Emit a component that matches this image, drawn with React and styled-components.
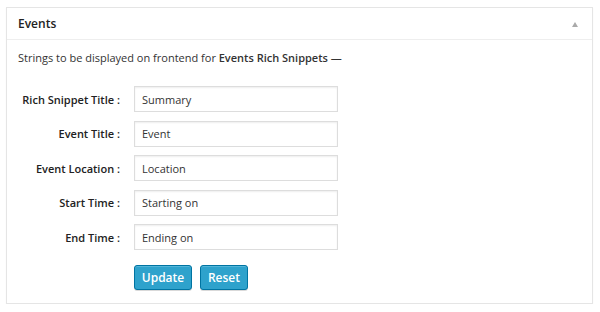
import React from "react";
import styled, { createGlobalStyle } from "styled-components";

const GlobalStyle = createGlobalStyle`
  body {
    margin: 0;
    background: #ffffff;
    font-family: "Open Sans", "Liberation Sans", sans-serif;
    color: #444;
  }
`;

const Page = styled.div`
  padding: 7px 7px 0 6px;
`;

const Panel = styled.div`
  width: 585px;
  height: 295px;
  border: 1px solid #e5e5e5;
  box-shadow: 0 1px 1px rgba(0, 0, 0, 0.06);
  background: #fff;
  display: flex;
  flex-direction: column;
`;

const Header = styled.div`
  height: 31px;
  border-bottom: 1px solid #eeeeee;
  display: flex;
  align-items: center;
  justify-content: space-between;
  padding: 0 14px 0 11px;
`;

const Title = styled.h3`
  margin: 0;
  font-size: 12px;
  font-weight: 600;
  color: #222;
`;

const Toggle = styled.span`
  width: 0;
  height: 0;
  border-left: 3.5px solid transparent;
  border-right: 3.5px solid transparent;
  border-bottom: 5px solid #aaaaaa;
  margin-top: 1px;
`;

const Body = styled.div`
  padding: 10px 11px 0 11px;
`;

const Intro = styled.p`
  margin: 0 0 20px;
  font-size: 11px;
  line-height: 16px;
  color: #333;

  strong {
    font-weight: 600;
  }
`;

const Form = styled.div`
  display: grid;
  grid-template-columns: 102px 204px;
  column-gap: 14px;
  row-gap: 8.5px;
  align-items: center;
`;

const Label = styled.label`
  text-align: right;
  font-size: 11px;
  font-weight: 600;
  color: #222;
`;

const Input = styled.input`
  box-sizing: border-box;
  height: 26px;
  width: 204px;
  margin: 0;
  padding: 0 7px;
  border: 1px solid #dddddd;
  box-shadow: inset 0 1px 2px rgba(0, 0, 0, 0.07);
  font-family: "Open Sans", "Liberation Sans", sans-serif;
  font-size: 11px;
  color: #333;
  outline: none;
`;

const Actions = styled.div`
  grid-column: 2;
  display: flex;
  gap: 8px;
  margin-top: 6.5px;
`;

const Button = styled.button`
  box-sizing: border-box;
  height: 25px;
  width: ${(p) => p.$width}px;
  padding: 0;
  background: #2ea2cc;
  border: 1px solid #0074a2;
  border-radius: 3px;
  box-shadow: inset 0 1px 0 rgba(120, 200, 230, 0.5),
    0 1px 0 rgba(0, 0, 0, 0.15);
  color: #fff;
  font-family: "Open Sans", "Liberation Sans", sans-serif;
  font-size: 12px;
  font-weight: 600;
  cursor: pointer;
`;

const fields = [
  { label: "Rich Snippet Title :", value: "Summary" },
  { label: "Event Title :", value: "Event" },
  { label: "Event Location :", value: "Location" },
  { label: "Start Time :", value: "Starting on" },
  { label: "End Time :", value: "Ending on" },
];

export default function App() {
  return (
    <>
      <GlobalStyle />
      <Page>
        <Panel>
          <Header>
            <Title>Events</Title>
            <Toggle />
          </Header>
          <Body>
            <Intro>
              Strings to be displayed on frontend for{" "}
              <strong>Events Rich Snippets</strong> —
            </Intro>
            <Form>
              {fields.map((f) => (
                <React.Fragment key={f.label}>
                  <Label>{f.label}</Label>
                  <Input defaultValue={f.value} />
                </React.Fragment>
              ))}
              <Actions>
                <Button $width={58}>Update</Button>
                <Button $width={48}>Reset</Button>
              </Actions>
            </Form>
          </Body>
        </Panel>
      </Page>
    </>
  );
}
